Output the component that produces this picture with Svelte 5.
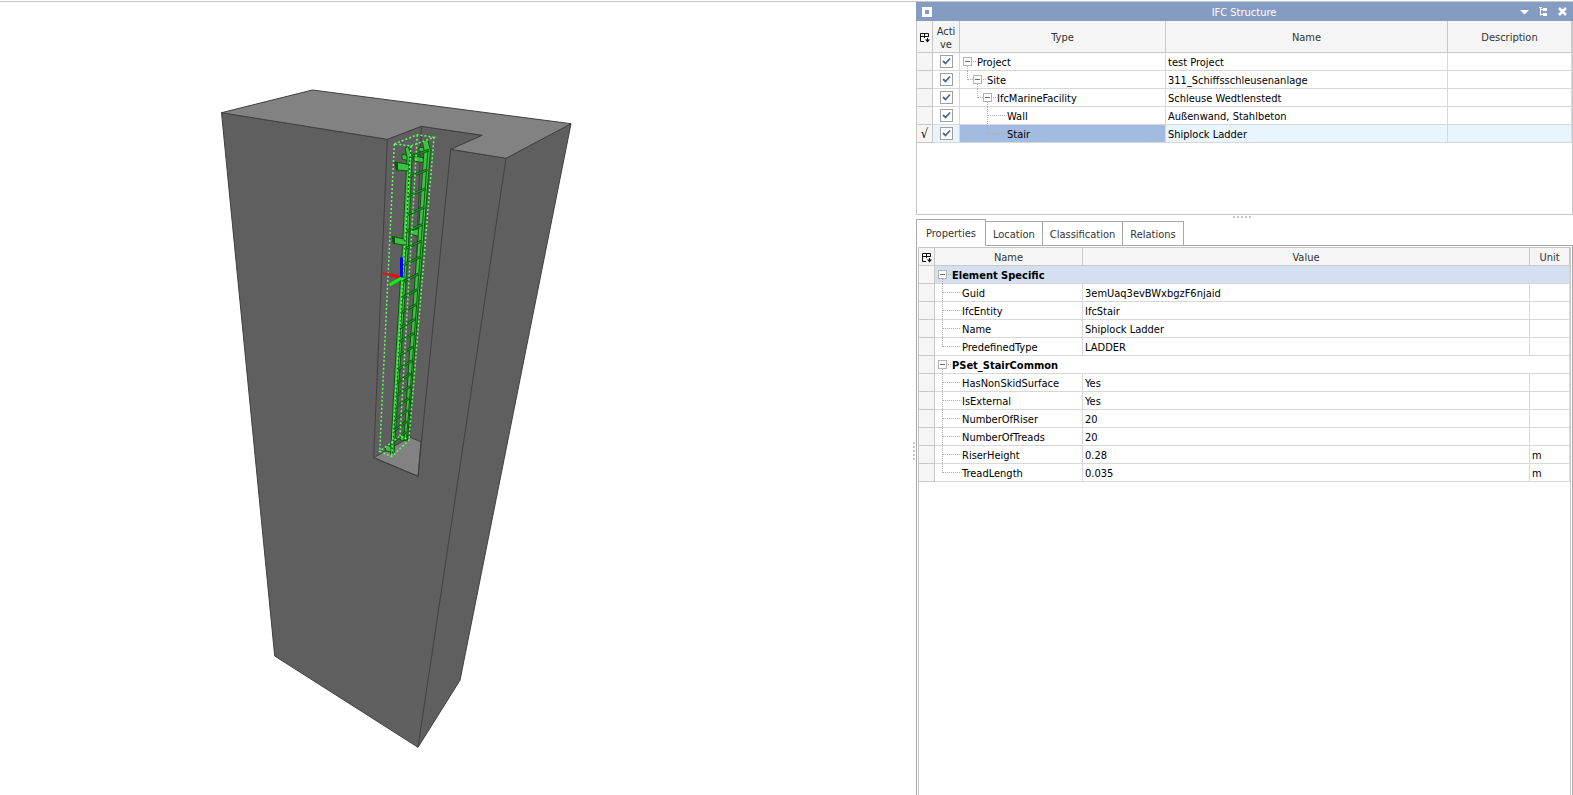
<script>
  let structure = $state([
    { level: 0, type: 'Project', name: 'test Project', active: true },
    { level: 1, type: 'Site', name: '311_Schiffsschleusenanlage', active: true },
    { level: 2, type: 'IfcMarineFacility', name: 'Schleuse Wedtlenstedt', active: true },
    { level: 3, type: 'Wall', name: 'Außenwand, Stahlbeton', active: true, leaf: true },
    { level: 3, type: 'Stair', name: 'Shiplock Ladder', active: true, leaf: true, last: true, selected: true }
  ]);

  const groups = [
    {
      title: 'Element Specific',
      focused: true,
      items: [
        ['Guid', '3emUaq3evBWxbgzF6njaid', ''],
        ['IfcEntity', 'IfcStair', ''],
        ['Name', 'Shiplock Ladder', ''],
        ['PredefinedType', 'LADDER', '']
      ]
    },
    {
      title: 'PSet_StairCommon',
      items: [
        ['HasNonSkidSurface', 'Yes', ''],
        ['IsExternal', 'Yes', ''],
        ['NumberOfRiser', '20', ''],
        ['NumberOfTreads', '20', ''],
        ['RiserHeight', '0.28', 'm'],
        ['TreadLength', '0.035', 'm']
      ]
    }
  ];

  const tabs = ['Properties', 'Location', 'Classification', 'Relations'];
  let current = $state('Properties');

  // Ladder rungs, foreshortened towards the bottom of the shaft
  const rungs = [157, 177, 196, 215, 232, 249, 265, 282, 298, 313, 328, 342, 356, 370, 383, 396, 408, 420, 431, 442].map((y) => {
    const t = (y - 157) / 285;
    return { x1: 410 - 17 * t, y1: y, x2: 429 - 23 * t, y2: y - 7 - 3 * t };
  });
</script>

{#snippet branch(level, leaf, last)}
  {@const c = 7.5 + 10 * level}
  <svg class="branch" width={17 + 10 * level} height="17" aria-hidden="true">
    <g class="dots">
      {#if level > 0}
        <path d="M{c - 10} 0V{last || !leaf ? 9 : 18}" />
        <path d="M{c - 9.5} 8.5H{leaf ? c + 9 : c - 4}" />
      {/if}
      {#if !leaf}
        <path d="M{c} 13V18M{c + 5.5} 8.5H{c + 9}" />
      {/if}
    </g>
    {#if !leaf}
      <rect x={c - 4} y="4.5" width="8" height="8" fill="#fff" stroke="#b4b4b4" />
      <path d="M{c - 2.5} 8.5H{c + 2.5}" stroke="#6e6e6e" />
    {/if}
  </svg>
{/snippet}

{#snippet chooser()}
  <button class="chooser" aria-label="Choose columns">
    <svg width="10" height="10" viewBox="0 0 10 10" fill="none" stroke="#111">
      <path d="M4 8.500H.5V.5H8.500V4M0 3.500H9M4.500 1V5" />
      <path d="M7.500 5V7" />
      <path d="M5 6.500H10L7.500 9.500Z" fill="#111" stroke="none" />
    </svg>
  </button>
{/snippet}

<div class="app">
  <main class="viewport">
    <svg class="scene" viewBox="0 2 912 793" role="img" aria-label="Lock wall with ladder">
      <g stroke="#404040" stroke-linejoin="round">
        <path fill="#5f5f5f" d="M221.500 112.700L387.300 139.300L421.300 126.300L482.300 135.300L450.700 149.300L506 158.300L571 123.700L460 680.300L418 747.300L274.700 656Z" />
        <path fill="#828282" d="M221.500 112.700L312.500 90L571 123.700L506 158.300L450.700 149.300L482.300 135.300L421.300 126.300L387.300 139.300Z" />
        <path fill="#828282" d="M373.700 457.700L418 476.300L421 441.700L410 437.300Z" />
        <path fill="none" d="M387.300 139.300L373.700 457.700L418 476.300L450.700 149.300M421.300 126.300L410 437.300M506 158.300L418 747.300" />
      </g>

      <g fill="#3fbf44" stroke="#075c0b" stroke-linejoin="round">
        <path d="M402 154L409 156V161L402 159ZM414 156L425 158V163L414 161ZM419 147L425 148V153L419 151Z" />
        <path d="M410 231L421 228V237L410 234Z" />
        <path d="M400 437L405 435L408 437V441L400 440Z" />
        <path d="M422.500 142L427.500 139L430.500 150L423 245L414 360L407.500 440H404L409 360L417.500 245L424 150Z" />
        <path d="M428 150L421 245L412.500 360L406.500 440" fill="none" />
        <path d="M405 148L408 146.500L412 156L408.500 245L400.500 360L394 454H390.500L395.500 360L402.500 245L407 157Z" />
        <path d="M409.500 157L406 245L398.500 360L392.500 453" fill="none" />
        <path d="M395 162L409 164.500V171L396.500 170Z" />
        <path d="M395 162L397.500 163V170H396.500Z" fill="#075c0b" />
        <path d="M392.300 236.300L404.700 239.300V245.300L393.300 243.300Z" />
        <path d="M392.300 236.300L394.500 237V243.500H393.300Z" fill="#075c0b" />
        <path d="M385 447L388 445L391 447V452L386 451Z" />
      </g>
      {#each rungs as r}
        <line {...r} stroke="#075c0b" stroke-width="2.600" />
        <line {...r} stroke="#2a9a2f" stroke-width="1" />
      {/each}

      <path
        fill="none"
        stroke="#66f866"
        stroke-width="1.500"
        stroke-dasharray="2 2"
        d="M394.300 144L417.300 134.700L434 137.300L411 146ZM394.300 144L379.700 451.300M411 146L391.700 456.700M434 137.300L409 440M417.300 134.700L400 436M379.700 451.300L391.700 456.700L409 440L400 436Z"
      />
      <g fill="none" stroke-width="3">
        <path stroke="#b02a2a" d="M382.700 273L391 275" />
        <path stroke="#f00" d="M391 275L401 277.500" />
        <path stroke="#00f" d="M401.500 277.500V257.500" />
        <path stroke="#0f0" d="M401.500 278L389.500 285" />
      </g>
    </svg>
  </main>

  <div class="grip vertical" role="separator" aria-orientation="vertical"></div>

  <aside class="dock">
    <header class="titlebar">
      <svg width="10" height="10" aria-hidden="true"><path d="M0 0H10V10H0ZM3 3V7H7V3Z" fill="#fff" fill-rule="evenodd" /></svg>
      <h1>IFC Structure</h1>
      <button aria-label="Window menu">
        <svg width="9" height="9"><path d="M0 3H9L4.500 7.500Z" fill="#fff" /></svg>
      </button>
      <button aria-label="Pin panel">
        <svg width="9" height="9"><path d="M0 .5H3M1.500 0V8.500M1.500 2.500H5M1.500 7.500H5" stroke="#fff" fill="none" /><path d="M4 1H8V4H4ZM4 6H8V9H4Z" fill="#fff" /></svg>
      </button>
      <button aria-label="Close panel">
        <svg width="9" height="9"><path d="M1 1L8 8M8 1L1 8" stroke="#fff" stroke-width="2.500" /></svg>
      </button>
    </header>

    <section class="structure">
      <table>
        <colgroup><col class="mark" /><col class="active" /><col class="type" /><col /><col class="desc" /></colgroup>
        <thead>
          <tr class="tall">
            <th>{@render chooser()}</th>
            <th class="wrap">Active</th>
            <th>Type</th>
            <th>Name</th>
            <th>Description</th>
          </tr>
        </thead>
        <tbody>
          {#each structure as row}
            <tr class:selected={row.selected}>
              <td class="mark">{row.selected ? '√' : ''}</td>
              <td class="check"><input type="checkbox" bind:checked={row.active} aria-label="{row.type} active" /></td>
              <td class="node"><div>{@render branch(row.level, row.leaf, row.last)}<span>{row.type}</span></div></td>
              <td>{row.name}</td>
              <td></td>
            </tr>
          {/each}
        </tbody>
      </table>
    </section>

    <div class="grip" role="separator" aria-orientation="horizontal"></div>

    <div class="tabs" role="tablist">
      {#each tabs as tab}
        <button role="tab" aria-selected={current === tab} onclick={() => (current = tab)}>{tab}</button>
      {/each}
    </div>

    <section class="body">
      <div class="properties">
        <table>
          <colgroup><col class="mark" /><col class="prop" /><col /><col class="unit" /></colgroup>
          <thead>
            <tr>
              <th>{@render chooser()}</th>
              <th>Name</th>
              <th>Value</th>
              <th>Unit</th>
            </tr>
          </thead>
          <tbody>
            {#each groups as group}
              <tr class="group" class:focused={group.focused}>
                <td class="mark"></td>
                <td class="node" colspan="3"><div>{@render branch(0, false, false)}<b>{group.title}</b></div></td>
              </tr>
              {#each group.items as [name, value, unit], i}
                <tr>
                  <td class="mark"></td>
                  <td class="node"><div>{@render branch(1, true, i === group.items.length - 1)}<span>{name}</span></div></td>
                  <td>{value}</td>
                  <td>{unit}</td>
                </tr>
              {/each}
            {/each}
          </tbody>
        </table>
      </div>
    </section>
  </aside>
</div>

<style>
  :global(body) {
    margin: 0;
    background: #fff;
  }
  .app {
    box-sizing: border-box;
    height: 100vh;
    padding-top: 1px;
    display: grid;
    grid-template-columns: minmax(0, 912fr) 4px minmax(0, 657fr);
    background: linear-gradient(#c8c8c8, #c8c8c8) 0 1px / 100% 1px no-repeat;
    font: 11px/13px Tahoma, 'DejaVu Sans Condensed', sans-serif;
    color: #000;
  }
  .viewport,
  .dock {
    min-height: 0;
    padding-top: 1px;
  }
  .scene {
    display: block;
    width: 100%;
    height: 100%;
  }
  .dock {
    display: flex;
    flex-direction: column;
  }
  button {
    padding: 0;
    border: 0;
    background: none;
    font: inherit;
    color: inherit;
  }
  button svg {
    display: block;
  }

  .grip {
    flex: none;
    align-self: center;
    width: 18px;
    height: 2px;
    margin: 1px 6px 1px 0;
    background: repeating-linear-gradient(90deg, #c8c8c8 0 2px, transparent 2px 4px);
  }
  .grip.vertical {
    width: 2px;
    height: 18px;
    margin: 106px 1px 0;
    background: repeating-linear-gradient(#c8c8c8 0 2px, transparent 2px 4px);
  }

  .titlebar {
    flex: none;
    display: flex;
    align-items: center;
    gap: 10px;
    height: 19px;
    padding: 0 6px;
    background: #849cc2;
    color: #fff;
  }
  .titlebar h1 {
    flex: 1;
    margin: 0 0 0 36px;
    padding-top: 2px;
    font-size: 11px;
    font-weight: 400;
    text-align: center;
  }

  .structure {
    flex: none;
    box-sizing: border-box;
    height: 194px;
    border: 1px solid #c8c8c8;
    border-top-width: 0;
  }
  table {
    width: 100%;
    table-layout: fixed;
    border-collapse: separate;
    border-spacing: 0;
  }
  col.mark {
    width: 16px;
  }
  col.active {
    width: 27px;
  }
  col.type {
    width: 206px;
  }
  col.desc {
    width: 124px;
  }
  col.prop {
    width: 148px;
  }
  col.unit {
    width: 40px;
  }
  tr {
    height: 18px;
  }
  tr.tall {
    height: 32px;
  }
  th,
  td {
    box-sizing: border-box;
    padding: 2px 2px 0;
    border: 0 solid #d8d8d8;
    border-width: 0 1px 1px 0;
    white-space: nowrap;
    text-align: left;
    vertical-align: middle;
  }
  th {
    border-color: #c8c8c8;
    background: #f5f5f5;
    color: #333;
    font-weight: 400;
    text-align: center;
  }
  th.wrap {
    white-space: normal;
    word-break: break-all;
  }
  td.mark {
    padding: 0;
    border-color: #c8c8c8;
    background: #f5f5f5;
    font-size: 13px;
    text-align: center;
  }
  td.check,
  td.node {
    padding: 0;
  }
  .node div {
    display: flex;
    align-items: center;
    height: 17px;
  }
  .node span,
  .node b {
    padding-top: 2px;
  }
  .branch {
    flex: none;
    overflow: visible;
  }
  .dots {
    fill: none;
    stroke: #b0b0b0;
    stroke-dasharray: 1 1;
  }
  .selected td:not(.mark) {
    background: #e8f4fe;
  }
  .selected td.node {
    background: #a2bbe1;
  }
  .focused td.node {
    background: #d4dff1;
  }
  .chooser {
    display: block;
    margin: 0 auto;
  }
  input {
    display: block;
    appearance: none;
    width: 13px;
    height: 13px;
    margin: 0 auto;
    border: 1px solid #a0a0a0;
    background: #fff;
  }
  input:checked {
    background: #fff url("data:image/svg+xml,%3Csvg xmlns='http://www.w3.org/2000/svg' width='11' height='11'%3E%3Cpath d='M2 5L4.500 7.500L9 2.500' fill='none' stroke='%234a689b' stroke-width='1.800'/%3E%3C/svg%3E");
  }

  .tabs {
    flex: none;
    display: flex;
    align-items: flex-end;
    margin-bottom: -1px;
    z-index: 1;
  }
  .tabs button {
    box-sizing: border-box;
    height: 25px;
    padding: 2px 7px 0;
    border: 1px solid #a8a8a8;
    border-left-width: 0;
    background: #fff;
    color: #333;
  }
  .tabs button[aria-selected='true'] {
    height: 27px;
    padding: 2px 9px 0;
    border-left-width: 1px;
    border-bottom-color: #fff;
  }
  .body {
    flex: 1;
    min-height: 0;
    border: 1px solid #a8a8a8;
    border-bottom: 0;
    padding: 1px 1px 0;
    display: flex;
  }
  .properties {
    flex: 1;
    min-width: 0;
    border: 1px solid #c8c8c8;
    border-bottom: 0;
  }
</style>
